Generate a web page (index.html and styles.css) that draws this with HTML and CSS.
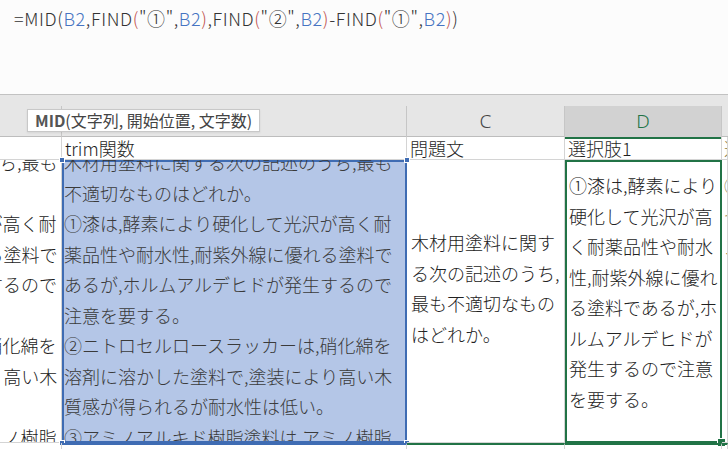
FILE: index.html
```html
<!DOCTYPE html>
<html lang="ja">
<head>
<meta charset="utf-8">
<link rel="stylesheet" href="styles.css">
</head>
<body>
<div class="app">
  <div class="formula-bar">
    <span class="k">=MID(</span><span class="ref">B2</span><span class="k">,FIND</span><span class="p">(</span><span class="k">"①",</span><span class="ref">B2</span><span class="p">)</span><span class="k">,FIND</span><span class="p">(</span><span class="k">"②",</span><span class="ref">B2</span><span class="p">)</span><span class="k">-FIND</span><span class="p">(</span><span class="k">"①",</span><span class="ref">B2</span><span class="p">)</span><span class="k">)</span>
  </div>
  <div class="head-band">
    <div class="col-heads">
      <div class="ch ch-a"></div>
      <div class="ch ch-b"></div>
      <div class="ch ch-c">C</div>
      <div class="ch ch-d">D</div>
      <div class="ch ch-e"></div>
    </div>
    <div class="tooltip"><b>MID</b>(文字列, 開始位置, 文字数)</div>
  </div>
  <div class="sheet">
    <div class="cell r1 c-a"></div>
    <div class="cell r1 c-b">trim関数</div>
    <div class="cell r1 c-c">問題文</div>
    <div class="cell r1 c-d">選択肢1</div>
    <div class="cell r1 c-e">選択肢2</div>

    <div class="cell r2 c-a">
      <div class="lines a-lines">
        <div>木材用塗料に関する次の記述のうち,最も</div>
        <div>不適切なものはどれか。</div>
        <div>①漆は,酵素により硬化して光沢が高く耐</div>
        <div>薬品性や耐水性,耐紫外線に優れる塗料で</div>
        <div>あるが,ホルムアルデヒドが発生するので</div>
        <div>注意を要する。</div>
        <div>②ニトロセルロースラッカーは,硝化綿を</div>
        <div>溶剤に溶かした塗料で,塗装により高い木</div>
        <div>質感が得られるが耐水性は低い。</div>
        <div>③アミノアルキド樹脂塗料は,アミノ樹脂</div>
      </div>
    </div>
    <div class="cell r2 c-b range">
      <div class="lines b-lines">
        <div>木材用塗料に関する次の記述のうち,最も</div>
        <div>不適切なものはどれか。</div>
        <div>①漆は,酵素により硬化して光沢が高く耐</div>
        <div>薬品性や耐水性,耐紫外線に優れる塗料で</div>
        <div>あるが,ホルムアルデヒドが発生するので</div>
        <div>注意を要する。</div>
        <div>②ニトロセルロースラッカーは,硝化綿を</div>
        <div>溶剤に溶かした塗料で,塗装により高い木</div>
        <div>質感が得られるが耐水性は低い。</div>
        <div>③アミノアルキド樹脂塗料は,アミノ樹脂</div>
      </div>
      <span class="h h-tl"></span><span class="h h-tr"></span><span class="h h-bl"></span><span class="h h-br"></span>
    </div>
    <div class="cell r2 c-c">
      <div class="lines c-lines">
        <div>木材用塗料に関す</div>
        <div>る次の記述のうち,</div>
        <div>最も不適切なもの</div>
        <div>はどれか。</div>
      </div>
    </div>
    <div class="cell r2 c-d active">
      <div class="lines d-lines">
        <div>①漆は,酵素により</div>
        <div>硬化して光沢が高</div>
        <div>く耐薬品性や耐水</div>
        <div>性,耐紫外線に優れ</div>
        <div>る塗料であるが,ホ</div>
        <div>ルムアルデヒドが</div>
        <div>発生するので注意</div>
        <div>を要する。</div>
      </div>
      <span class="fill-handle"></span>
    </div>
    <div class="cell r2 c-e">
      <div class="lines e-lines">
        <div>②ニトロ</div>
        <div>セルロー</div>
        <div>スラッカ</div>
      </div>
    </div>

    <div class="cell r3 c-a"></div>
    <div class="cell r3 c-b b3"></div>
    <div class="cell r3 c-c g3"></div>
    <div class="cell r3 c-d g3"></div>
    <div class="cell r3 c-e g3"></div>
  </div>
</div>
</body>
</html>
```

FILE: styles.css
```css
html, body {
  margin: 0;
  padding: 0;
  background: #ffffff;
}

.app {
  width: 728px;
  height: 449px;
  overflow: hidden;
  font-family: "Noto Sans CJK JP", "Noto Sans", sans-serif;
  color: #222222;
}

.formula-bar {
  height: 95px;
  box-sizing: border-box;
  background: #fcfcfc;
  border-bottom: 1px solid #c2c2c2;
  padding: 5px 0 0 14px;
  font-size: 18px;
  font-weight: 300;
  line-height: 26px;
  letter-spacing: 0.6px;
  white-space: nowrap;
  color: #333333;
}

.formula-bar .ref { color: #4674c2; }
.formula-bar .p { color: #c0504d; }

.head-band {
  position: relative;
  height: 42px;
  background: #e6e6e6;
  padding-top: 11px;
  box-sizing: border-box;
}

.col-heads {
  display: grid;
  grid-template-columns: 62px 345px 158px 157px 6px;
  height: 31px;
  border-bottom: 1px solid #bdbdbd;
  box-sizing: border-box;
}

.ch {
  border-right: 1px solid #c6c6c6;
  text-align: center;
  font-family: "Noto Sans", "Liberation Sans", sans-serif;
  font-weight: 300;
  font-size: 19px;
  line-height: 31px;
  color: #444444;
}

.ch-d {
  background: #d2d2d2;
  color: #217346;
  border-bottom: 2px solid #217346;
  margin-bottom: -1px;
}

.ch-e { border-right: none; }

.tooltip {
  position: absolute;
  left: 27px;
  top: 14px;
  height: 23px;
  width: 233px;
  box-sizing: border-box;
  background: #ffffff;
  border: 1px solid #c8c8c8;
  box-shadow: 0 1px 2px rgba(0, 0, 0, 0.08);
  font-size: 16px;
  line-height: 21px;
  padding-left: 7px;
  color: #444444;
  white-space: nowrap;
}

.tooltip b { color: #555555; font-weight: 700; }

.sheet {
  display: grid;
  grid-template-columns: 62px 345px 158px 157px 6px;
  grid-template-rows: 23px 283px 10px;
}

.cell {
  position: relative;
  box-sizing: border-box;
  border-right: 1px solid #d4d4d4;
  border-bottom: 1px solid #d4d4d4;
  overflow: hidden;
  font-size: 18px;
  font-weight: 300;
  white-space: nowrap;
}

.r1 {
  line-height: 23px;
  padding-left: 3px;
  color: #1f1f1f;
}

.r1.c-e { padding-left: 2px; color: #8a7a40; }

.lines {
  line-height: 30.5px;
  color: #222222;
}

.a-lines {
  margin-left: -271px;
  margin-top: -13px;
}

.range {
  background: #b4c6e7;
  overflow: visible;
  border: none;
  box-shadow: inset 2px 0 0 #3f6cb3, inset -2px 0 0 #3f6cb3, inset 0 -2px 0 #3f6cb3, inset 0 2px 0 #3f6cb3;
}

.range .lines {
  height: 281px;
  overflow: hidden;
  padding-left: 2px;
  margin-top: 0;
}

.b-lines > div:first-child { margin-top: -13px; }

.b-lines { color: #3a3a3a; }

.h {
  position: absolute;
  width: 6px;
  height: 6px;
  background: #3f6cb3;
  border: 1px solid #ffffff;
  box-sizing: border-box;
}

.h-tl { left: -3px; top: -3px; }
.h-tr { right: -3px; top: -3px; }
.h-bl { left: -3px; bottom: -3px; }
.h-br { right: -3px; bottom: -3px; }

.c-lines {
  padding: 67px 0 0 4px;
}

.active {
  overflow: visible;
  border: none;
  box-shadow: inset 0 0 0 2px #217346;
}

.d-lines {
  padding: 10px 0 0 4px;
}

.fill-handle {
  position: absolute;
  right: -4px;
  bottom: -4px;
  width: 7px;
  height: 7px;
  background: #217346;
  border: 1px solid #ffffff;
}

.e-lines {
  padding: 10px 0 0 2px;
  color: #8a7a40;
  font-size: 18px;
}

.b3 {
  border-top: 2px solid #3f6cb3;
}

.g3 {
  border-top: 2px solid #217346;
}
```
